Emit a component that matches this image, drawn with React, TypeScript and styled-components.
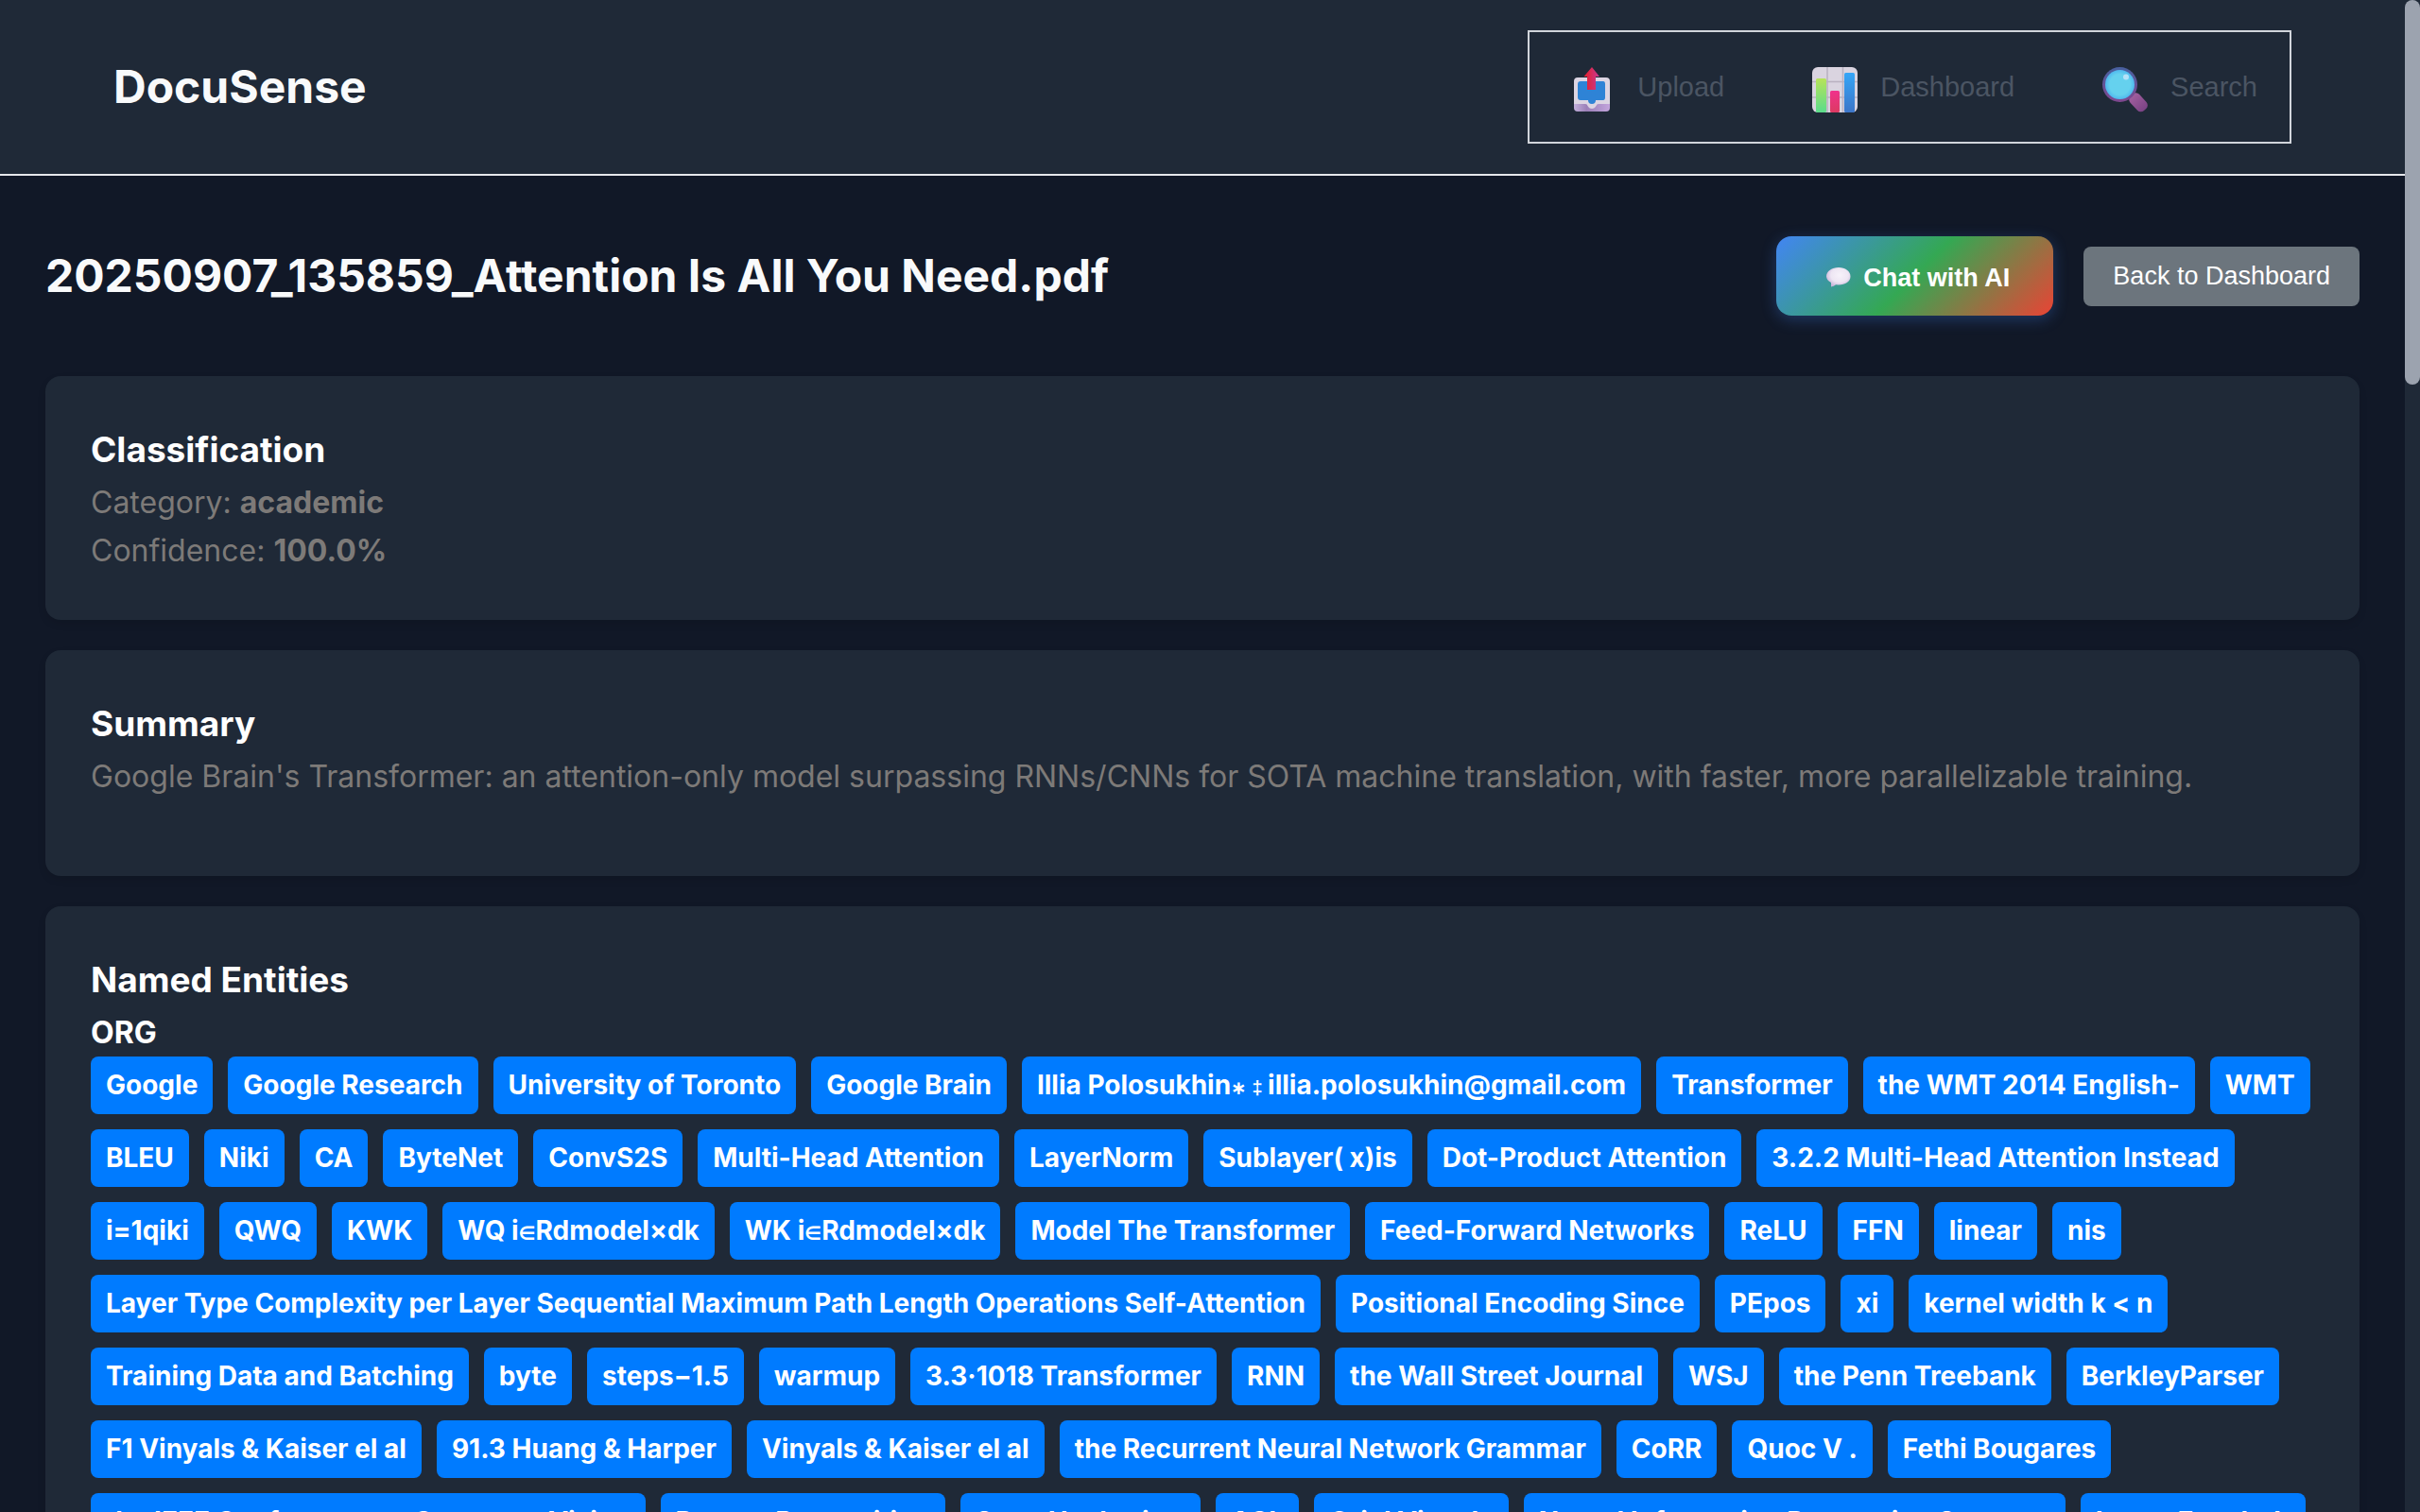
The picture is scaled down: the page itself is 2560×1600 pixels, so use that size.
import React from "react";
import styled, { createGlobalStyle } from "styled-components";

const GlobalStyle = createGlobalStyle`
  *, *::before, *::after { box-sizing: border-box; }
  body {
    margin: 0;
    background: #111827;
    color: #f9fafb;
    font-family: Inter, "Noto Sans", sans-serif;
    font-size: 32px;
    line-height: 51px;
  }
  h1, h2, h3, h4, p, ul { margin: 0; padding: 0; }
`;

const Page = styled.div`
  height: 100vh;
  overflow: hidden;
  padding-right: 16px;
`;

const ScrollTrack = styled.div`
  position: fixed;
  top: 0;
  right: 0;
  bottom: 0;
  width: 16px;
  background: #1f2937;
`;

const ScrollThumb = styled.div`
  height: 407px;
  border-radius: 8px;
  background: #9ca3af;
`;

const Header = styled.header`
  display: flex;
  align-items: center;
  justify-content: space-between;
  padding: 32px 120px;
  background: #1f2937;
  border-bottom: 2px solid #e5e7eb;
`;

const Brand = styled.h1`
  font-size: 48px;
  line-height: 76px;
  font-weight: 700;
`;

const Nav = styled.nav`
  display: flex;
  align-items: center;
  gap: 21px;
  height: 120px;
  padding: 0 2px;
  border: 2px solid #d1d5db;
`;

const NavButton = styled.button`
  display: flex;
  align-items: center;
  gap: 16px;
  padding: 16px 32px;
  border: 0;
  background: none;
  color: #4b5563;
  font: 400 29px/34px "Liberation Sans", Arial, sans-serif;
`;

const NavIcon = styled.svg`
  width: 48px;
  height: 48px;
  margin: 6px 8px 0;
  overflow: visible;
`;

const Main = styled.main`
  display: flex;
  flex-direction: column;
  gap: 32px;
  padding: 64px 48px;
`;

const TitleBar = styled.div`
  display: flex;
  align-items: center;
  justify-content: space-between;
  padding-bottom: 32px;
`;

const Title = styled.h2`
  font-size: 48px;
  line-height: 76px;
  font-weight: 700;
`;

const Actions = styled.div`
  display: flex;
  align-items: center;
  gap: 32px;
`;

const ActionButton = styled.button`
  border: 0;
  color: #fff;
  font: 400 27px/31px "Liberation Sans", Arial, sans-serif;
`;

const ChatButton = styled(ActionButton)`
  display: flex;
  align-items: center;
  gap: 12px;
  height: 84px;
  padding: 4px 46px 0 52px;
  border-radius: 16px;
  background: linear-gradient(135deg, #4285f4, #34a853, #ea4335);
  box-shadow: 0 4px 16px rgba(66, 133, 244, 0.3);
  font-weight: 700;
`;

const ChatIcon = styled.svg`
  width: 28px;
  height: 24px;
`;

const BackButton = styled(ActionButton)`
  height: 63px;
  padding: 0 31px;
  border-radius: 8px;
  background: #6c757d;
`;

const Card = styled.section`
  padding: 48px;
  border-radius: 16px;
  background: #1f2937;
  box-shadow: 0 4px 8px rgba(0, 0, 0, 0.1);
`;

const CardTitle = styled.h3`
  font-size: 37px;
  line-height: 60px;
  font-weight: 700;
  color: #fff;
`;

const GroupTitle = styled.h4`
  font-size: 32px;
  line-height: 51px;
  font-weight: 700;
  color: #fff;
`;

const Text = styled.p<{ $spaced?: boolean }>`
  margin-bottom: ${(p) => (p.$spaced ? "32px" : "0")};
  color: #7d7a78;
`;

const Chips = styled.ul`
  display: flex;
  flex-wrap: wrap;
  gap: 16px;
  list-style: none;
`;

const Chip = styled.li`
  padding: 8px 16px;
  border-radius: 8px;
  background: #007bff;
  color: #fff;
  font-size: 28px;
  line-height: 45px;
  font-weight: 700;
  white-space: nowrap;
`;

const MathSymbol = styled.span`
  font-family: "Liberation Sans", "DejaVu Sans", sans-serif;
  font-size: 20px;
  line-height: 1;
`;

const organizations = [
  "Google", "Google Research", "University of Toronto", "Google Brain",
  "Illia Polosukhin∗ ‡ illia.polosukhin@gmail.com", "Transformer",
  "the WMT 2014 English-", "WMT",
  "BLEU", "Niki", "CA", "ByteNet", "ConvS2S", "Multi-Head Attention", "LayerNorm",
  "Sublayer( x)is", "Dot-Product Attention", "3.2.2 Multi-Head Attention Instead",
  "i=1qiki", "QWQ", "KWK", "WQ i∈Rdmodel×dk", "WK i∈Rdmodel×dk",
  "Model The Transformer", "Feed-Forward Networks", "ReLU", "FFN", "linear", "nis",
  "Layer Type Complexity per Layer Sequential Maximum Path Length Operations Self-Attention",
  "Positional Encoding Since", "PEpos", "xi", "kernel width k < n",
  "Training Data and Batching", "byte", "steps−1.5", "warmup", "3.3·1018 Transformer",
  "RNN", "the Wall Street Journal", "WSJ", "the Penn Treebank", "BerkleyParser",
  "F1 Vinyals & Kaiser el al", "91.3 Huang & Harper", "Vinyals & Kaiser el al",
  "the Recurrent Neural Network Grammar", "CoRR", "Quoc V .", "Fethi Bougares",
  "the IEEE Conference on Computer Vision", "Pattern Recognition", "Sepp Hochreiter",
  "ACL", "Oriol Vinyals", "Neural Information Processing Systems", "Lasse Espeholt",
];

const withSymbols = (name: string) =>
  name.split(/(∗ ‡ |∈)/).map((part, i) =>
    i % 2 ? <MathSymbol key={i}>{part}</MathSymbol> : part
  );

const UploadIcon = () => (
  <NavIcon viewBox="0 0 48 48" aria-hidden="true">
    <defs>
      <linearGradient id="up-arrow">
        <stop offset="0.2" stopColor="#e0243c" />
        <stop offset="1" stopColor="#c73a95" />
      </linearGradient>
      <linearGradient id="up-base">
        <stop offset="0" stopColor="#c3b0dc" />
        <stop offset="0.35" stopColor="#9c80b8" />
        <stop offset="0.6" stopColor="#a98dc6" />
        <stop offset="1" stopColor="#c3a5dc" />
      </linearGradient>
    </defs>
    <rect x="5" y="18" width="38" height="29" rx="4" fill="url(#up-base)" />
    <path d="M9 11H39Q43 11 43 15V39H31Q29 39 28.500 41Q27 44 24 44Q21 44 19.500 41Q19 39 17 39H5V15Q5 11 9 11Z" fill="#dcd5e3" />
    <path d="M12 15H36Q38 15 38 18V32Q38 35 36 35H28Q28 39 24 39Q20 39 20 35H12Q9 35 9 32V18Q9 15 12 15Z" fill="#2e83d6" />
    <path d="M24 0L32 10H28V24H19V10H15.500Z" fill="url(#up-arrow)" />
  </NavIcon>
);

const DashboardIcon = () => (
  <NavIcon viewBox="0 0 48 48" aria-hidden="true">
    <defs>
      <linearGradient id="bar-green" x2="0" y2="1">
        <stop offset="0" stopColor="#b7e35a" />
        <stop offset="1" stopColor="#5bdc8c" />
      </linearGradient>
      <linearGradient id="bar-pink" x2="0" y2="1">
        <stop offset="0" stopColor="#f0328c" />
        <stop offset="1" stopColor="#dc3a62" />
      </linearGradient>
      <linearGradient id="bar-blue" x2="0" y2="1">
        <stop offset="0" stopColor="#35a6f7" />
        <stop offset="1" stopColor="#3d75c8" />
      </linearGradient>
    </defs>
    <rect width="48" height="48" rx="6" fill="#dad4e0" />
    <path d="M16 0V48M32.500 0V48M0 15.500H48M0 32H48" stroke="#b9b1c0" strokeWidth="1.500" />
    <rect x="4" y="12" width="11" height="36" rx="1.500" fill="url(#bar-green)" />
    <rect x="19" y="25" width="10" height="23" rx="1.500" fill="url(#bar-pink)" />
    <rect x="34" y="6" width="11" height="42" rx="1.500" fill="url(#bar-blue)" />
  </NavIcon>
);

const SearchIcon = () => (
  <NavIcon viewBox="0 0 48 48" aria-hidden="true">
    <defs>
      <linearGradient id="lens-rim" x2="0" y2="1">
        <stop offset="0" stopColor="#47609f" />
        <stop offset="1" stopColor="#80478f" />
      </linearGradient>
      <radialGradient id="lens-glass">
        <stop offset="0.7" stopColor="#65d1ee" />
        <stop offset="1" stopColor="#4fb8ee" />
      </radialGradient>
      <linearGradient id="lens-handle" x2="1" y2="0">
        <stop offset="0" stopColor="#a2609f" />
        <stop offset="1" stopColor="#7b4385" />
      </linearGradient>
    </defs>
    <rect x="27" y="31" width="21" height="13" rx="5" transform="rotate(47 38 38)" fill="url(#lens-handle)" />
    <circle cx="18.500" cy="18.500" r="18.500" fill="url(#lens-rim)" />
    <circle cx="18.500" cy="18.500" r="15.500" fill="url(#lens-glass)" />
    <circle cx="25" cy="10.500" r="3" fill="#b5e2f8" />
  </NavIcon>
);

const SpeechIcon = () => (
  <ChatIcon viewBox="0 0 28 24" aria-hidden="true">
    <defs>
      <radialGradient id="bubble" cx="0.55" cy="0.4" r="0.6">
        <stop offset="0" stopColor="#f7f2fa" />
        <stop offset="0.6" stopColor="#eee6f3" />
        <stop offset="1" stopColor="#c9b4da" />
      </radialGradient>
    </defs>
    <path d="M14 1C21 1 26.500 5 26.500 10.500C26.500 16 21 19.500 14 19.500L11 19.300Q9 21 6 21.500V17C3 15.500 1 13 1 10.500C1 5 7 1 14 1Z" fill="url(#bubble)" />
  </ChatIcon>
);

export default function App() {
  return (
    <>
      <GlobalStyle />
      <Page>
        <Header>
          <Brand>DocuSense</Brand>
          <Nav aria-label="Main">
            <NavButton><UploadIcon />Upload</NavButton>
            <NavButton><DashboardIcon />Dashboard</NavButton>
            <NavButton><SearchIcon />Search</NavButton>
          </Nav>
        </Header>
        <Main>
          <TitleBar>
            <Title>20250907_135859_Attention Is All You Need.pdf</Title>
            <Actions>
              <ChatButton><SpeechIcon />Chat with AI</ChatButton>
              <BackButton>Back to Dashboard</BackButton>
            </Actions>
          </TitleBar>
          <Card>
            <CardTitle>Classification</CardTitle>
            <Text>Category: <strong>academic</strong></Text>
            <Text>Confidence: <strong>100.0%</strong></Text>
          </Card>
          <Card>
            <CardTitle>Summary</CardTitle>
            <Text $spaced>
              Google Brain's Transformer: an attention-only model surpassing RNNs/CNNs for SOTA
              machine translation, with faster, more parallelizable training.
            </Text>
          </Card>
          <Card>
            <CardTitle>Named Entities</CardTitle>
            <GroupTitle>ORG</GroupTitle>
            <Chips>
              {organizations.map((name) => <Chip key={name}>{withSymbols(name)}</Chip>)}
            </Chips>
          </Card>
        </Main>
      </Page>
      <ScrollTrack aria-hidden="true"><ScrollThumb /></ScrollTrack>
    </>
  );
}
